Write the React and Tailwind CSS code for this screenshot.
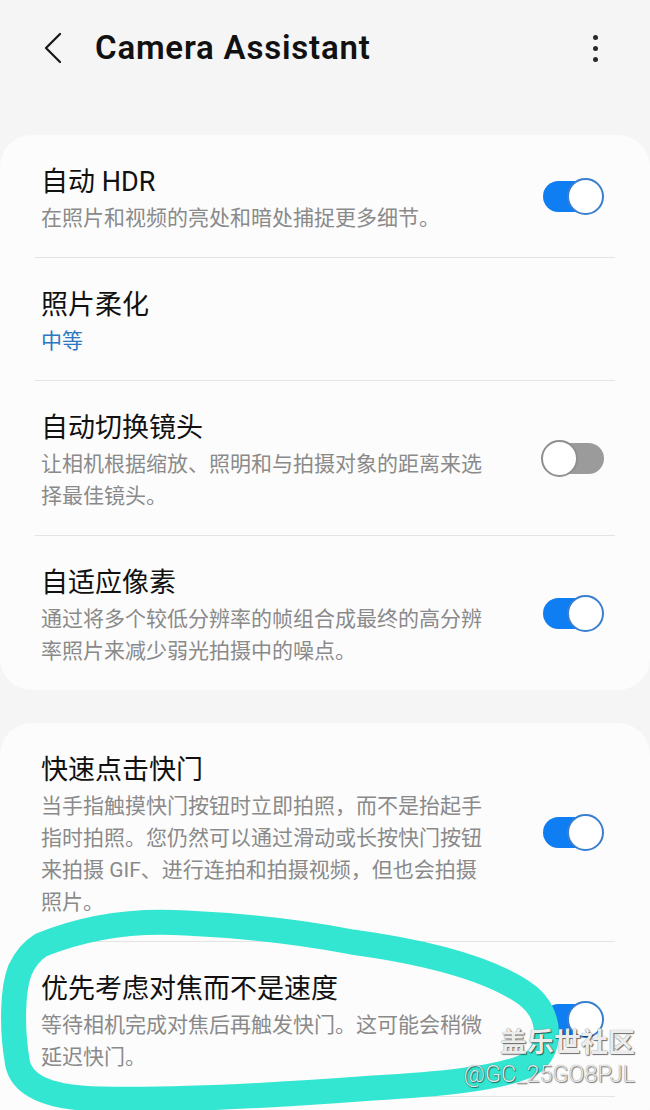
import React from "react";

const FONT = { fontFamily: 'Roboto, "Noto Sans CJK SC", "Noto Sans", sans-serif' };

function Toggle({ on }) {
  if (on) {
    return (
      <div className="relative w-[62px] h-[37px] shrink-0">
        <div className="absolute left-[1px] top-[3px] w-[55px] h-[31px] rounded-full bg-[#0f7ef2]" />
        <div className="absolute right-0 top-0 w-[37px] h-[37px] rounded-full bg-white border-2 border-[#3a7fcf]" />
      </div>
    );
  }
  return (
    <div className="relative w-[63px] h-[37px] shrink-0">
      <div className="absolute right-0 top-[3px] w-[55px] h-[31px] rounded-full bg-[#9b9b9b]" />
      <div className="absolute left-0 top-0 w-[37px] h-[37px] rounded-full bg-white border-2 border-[#8f8f8f]" />
    </div>
  );
}

function Row({ title, lines = [], value, toggle, divider = true }) {
  return (
    <div>
      <div className="flex items-center">
        <div className="flex-1 pl-[41px] pt-[30px] pb-[23px]">
          <div className="text-[27px] leading-[34px] text-[#111111]">{title}</div>
          {value && (
            <div className="mt-[3px] text-[21px] leading-[32px] text-[#2a78c2]">{value}</div>
          )}
          {lines.length > 0 && (
            <div className="mt-[3px] text-[21px] leading-[32px] text-[#8a8a8a]">
              {lines.map((l, i) => (
                <div key={i} className="whitespace-nowrap">{l}</div>
              ))}
            </div>
          )}
        </div>
        {toggle !== undefined && (
          <div className="mr-[46px]">
            <Toggle on={toggle} />
          </div>
        )}
      </div>
      {divider && <div className="mx-[35px] h-px bg-[#e4e4e4]" />}
    </div>
  );
}

export default function App() {
  return (
    <div className="relative w-[650px] h-[1110px] overflow-hidden bg-[#f5f5f5]" style={FONT}>
      {/* Header */}
      <div className="flex items-center h-[96px]">
        <svg className="ml-[44px]" width="18" height="32" viewBox="0 0 18 32" fill="none">
          <path d="M16 2 L2 16 L16 30" stroke="#1a1a1a" strokeWidth="2.3" strokeLinecap="round" strokeLinejoin="round" />
        </svg>
        <div className="ml-[33px] text-[33px] font-semibold text-[#111111] tracking-[0.8px]">Camera Assistant</div>
        <div className="ml-auto mr-[52px] flex flex-col gap-[6px]">
          <div className="w-[5px] h-[5px] rounded-full bg-[#2a2a2a]" />
          <div className="w-[5px] h-[5px] rounded-full bg-[#2a2a2a]" />
          <div className="w-[5px] h-[5px] rounded-full bg-[#2a2a2a]" />
        </div>
      </div>

      {/* Card 1 */}
      <div className="mt-[39px] bg-[#fcfcfc] rounded-[32px]">
        <Row title="自动 HDR" lines={["在照片和视频的亮处和暗处捕捉更多细节。"]} toggle={true} />
        <Row title="照片柔化" value="中等" />
        <Row
          title="自动切换镜头"
          lines={["让相机根据缩放、照明和与拍摄对象的距离来选", "择最佳镜头。"]}
          toggle={false}
        />
        <Row
          title="自适应像素"
          lines={["通过将多个较低分辨率的帧组合成最终的高分辨", "率照片来减少弱光拍摄中的噪点。"]}
          toggle={true}
          divider={false}
        />
      </div>

      {/* Card 2 */}
      <div className="mt-[33px] bg-[#fcfcfc] rounded-[32px] pb-[40px]">
        <Row
          title="快速点击快门"
          lines={[
            "当手指触摸快门按钮时立即拍照，而不是抬起手",
            "指时拍照。您仍然可以通过滑动或长按快门按钮",
            "来拍摄 GIF、进行连拍和拍摄视频，但也会拍摄",
            "照片。",
          ]}
          toggle={true}
        />
        <Row
          title="优先考虑对焦而不是速度"
          lines={["等待相机完成对焦后再触发快门。这可能会稍微", "延迟快门。"]}
          toggle={true}
        />
      </div>

      {/* Hand-drawn annotation loop */}
      <svg className="absolute left-0 top-0 pointer-events-none" width="650" height="1110" viewBox="0 0 650 1110" fill="none">
        <path
          d="M41 945 C90 925 140 920 186 923 C250 926 300 932 352 942 C425 952 490 968 527 995 C553 1015 552 1052 530 1064 C500 1080 425 1085 373 1088 C280 1095 180 1101 100 1099 C50 1098 20 1086 17 1060 C12 1030 12 990 20 970 C26 957 33 950 41 945 Z"
          stroke="#33e6d1"
          strokeWidth="25"
          strokeLinecap="round"
          strokeLinejoin="round"
        />
      </svg>

      {/* Watermark */}
      <div className="absolute right-[15px] top-[1026px] flex flex-col items-end pointer-events-none">
        <div className="text-[27px] leading-[34px] font-bold text-[#ececec] [text-shadow:1px_1px_1px_rgba(0,0,0,0.55),0_0_1px_rgba(0,0,0,0.5)]">
          盖乐世社区
        </div>
        <div className="text-[23.5px] leading-[28px] font-light text-[#e6e6e6] [text-shadow:1px_1px_1px_rgba(0,0,0,0.5),0_0_1px_rgba(0,0,0,0.45)]">
          @GC_25GO8PJL
        </div>
      </div>
    </div>
  );
}
